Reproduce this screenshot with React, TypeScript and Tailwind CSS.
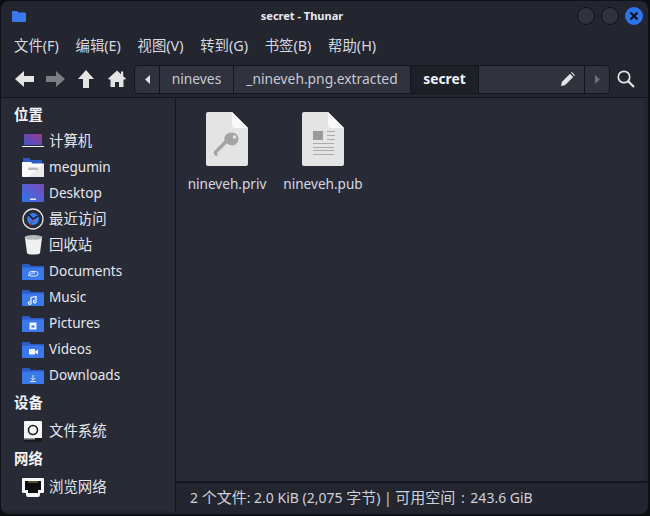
import type { ReactNode } from "react";

const FONT = "font-['Noto_Sans','Noto_Sans_CJK_SC',sans-serif]";

/* CJK glyphs sit a touch larger than the latin text in this theme */
function C({ children }: { children: ReactNode }) {
  return <span className="text-[15px]">{children}</span>;
}

/* Blue place folder, glyph drawn by the caller */
function FolderIcon({ children }: { children?: ReactNode }) {
  return (
    <svg width="22" height="17" viewBox="0 0 22 17">
      <path d="M0 2a1 1 0 0 1 1-1h6l2 2h12a1 1 0 0 1 1 1v12a1 1 0 0 1-1 1H1a1 1 0 0 1-1-1z" fill="#2a5cc4" />
      <path d="M0 5.500a1 1 0 0 1 1-1h20a1 1 0 0 1 1 1V16a1 1 0 0 1-1 1H1a1 1 0 0 1-1-1z" fill="#3b78ea" />
      {children}
    </svg>
  );
}

function ComputerIcon() {
  return (
    <svg width="22" height="14" viewBox="0 0 22 14">
      <defs>
        <linearGradient id="screen" x1="0" y1="1" x2="1" y2="0">
          <stop offset="0" stopColor="#3a58c8" />
          <stop offset="1" stopColor="#a0388e" />
        </linearGradient>
      </defs>
      <rect x="2" y="0" width="18" height="11" fill="url(#screen)" />
      <rect x="0" y="12" width="22" height="1" fill="#f5f5f5" />
    </svg>
  );
}

function HomeIcon() {
  return (
    <svg width="22" height="20" viewBox="0 0 22 20">
      <path d="M1 1h6l2 2h10a1 1 0 0 1 1 1v3H1z" fill="#2a5cc4" />
      <path d="M0 5h9l1.500 1.500H22V19a1 1 0 0 1-1 1H1a1 1 0 0 1-1-1z" fill="#fafafa" />
      <path d="M22 6.500V19a1 1 0 0 1-1 1H6z" fill="#eaeaea" />
      <rect x="6" y="10.500" width="10" height="2.500" rx="1" fill="#b9b9b9" />
    </svg>
  );
}

function DesktopIcon() {
  return (
    <svg width="22" height="18" viewBox="0 0 22 18">
      <defs>
        <linearGradient id="desk" x1="0" y1="1" x2="1" y2="0">
          <stop offset="0" stopColor="#2f74ee" />
          <stop offset="1" stopColor="#7a4ab4" />
        </linearGradient>
      </defs>
      <rect width="22" height="18" rx="1" fill="url(#desk)" />
      <rect x="8" y="14.500" width="6" height="1.500" fill="#e8e8f0" />
    </svg>
  );
}

function RecentIcon() {
  return (
    <svg width="22" height="22" viewBox="0 0 22 22">
      <circle cx="11" cy="11" r="10" fill="#282a36" stroke="#e4e4e4" strokeWidth="1.300" />
      <circle cx="11" cy="11" r="6" fill="#3b78ea" />
      <path d="M6.500 6.500l4.500 4.500 5-3" fill="none" stroke="#10131c" strokeWidth="1.400" />
      <path d="M11 11l-3 7" stroke="#b0303c" strokeWidth="1" />
    </svg>
  );
}

function TrashIcon() {
  return (
    <svg width="19" height="20" viewBox="0 0 19 20">
      <ellipse cx="9.500" cy="2.500" rx="9" ry="2.500" fill="#b8b8b8" />
      <path d="M1 3c2 2 15 2 17 0l-2 15c-.5 2-12.500 2-13 0z" fill="#f0f0ee" />
    </svg>
  );
}

function DriveIcon() {
  return (
    <svg width="18" height="21" viewBox="0 0 18 21">
      <rect width="18" height="21" rx="1" fill="#f7f7f7" />
      <rect y="17" width="18" height="4" fill="#1a1a1a" />
      <rect y="17" width="11" height="1.500" fill="#9a9a9a" />
      <circle cx="9" cy="9" r="4.500" fill="#f7f7f7" stroke="#1c1c1c" strokeWidth="1.600" />
    </svg>
  );
}

function NetworkIcon() {
  return (
    <svg width="22" height="19" viewBox="0 0 22 19">
      <path d="M1 0h20a1 1 0 0 1 1 1v13a1 1 0 0 1-1 1h-3v2a2 2 0 0 1-2 2H6a2 2 0 0 1-2-2v-2H1a1 1 0 0 1-1-1V1a1 1 0 0 1 1-1z" fill="#f7f7f7" />
      <path d="M3 3h16v9h-3v3H6v-3H3z" fill="#0d0d0d" />
      <path d="M7 3v2M9 3v2M11 3v2M13 3v2M15 3v2" stroke="#a88f4a" strokeWidth="1" />
    </svg>
  );
}

const placeFolders: { label: string; glyph: ReactNode }[] = [
  {
    label: "Documents",
    glyph: (
      <>
        <rect x="7" y="8.500" width="9" height="4.500" rx="2.200" fill="none" stroke="#dfe8fb" strokeWidth="1" />
        <path d="M6 13l4-3h3" fill="none" stroke="#dfe8fb" strokeWidth="1" />
      </>
    ),
  },
  { label: "Music", glyph: <path d="M9 14V8.500l5-1v5M9 14a1.300 1.300 0 1 1-1-1.200M14 12.500a1.300 1.300 0 1 1-1-1.200" fill="none" stroke="#f2f5fd" strokeWidth="1.200" /> },
  {
    label: "Pictures",
    glyph: (
      <>
        <rect x="7.500" y="7.500" width="7" height="7" fill="#f2f5fd" />
        <rect x="9.500" y="10.500" width="3" height="2" fill="#3b78ea" />
      </>
    ),
  },
  {
    label: "Videos",
    glyph: (
      <>
        <rect x="7" y="8" width="6" height="5.500" rx=".5" fill="#f2f5fd" />
        <path d="M13 10.500l3-2v5l-3-2z" fill="#f2f5fd" />
      </>
    ),
  },
  { label: "Downloads", glyph: <path d="M11 8v5M8.800 11l2.200 2.200 2.200-2.200M8 14.500h6" fill="none" stroke="#dfe8fb" strokeWidth="1" /> },
];

function SideHeader({ label, first }: { label: string; first?: boolean }) {
  return (
    <div className={`flex items-center pl-[13px] text-[14.4px] font-bold text-[#f2f4f8] ${first ? "h-[27px]" : "h-[30px]"}`}>
      {label}
    </div>
  );
}

function SideRow({ icon, label, cjk }: { icon: ReactNode; label: string; cjk?: boolean }) {
  return (
    <div className={`flex h-[26px] items-center text-[#e4e7ee] ${cjk ? "text-[14.4px]" : "text-[13.6px]"}`}>
      <span className="ml-[21px] mr-[5px] flex w-[22px] justify-center">{icon}</span>
      {label}
    </div>
  );
}

function FileIcon({ children }: { children: ReactNode }) {
  return (
    <svg width="42" height="54" viewBox="0 0 42 54">
      <path d="M2 0h24l16 16v36a2 2 0 0 1-2 2H2a2 2 0 0 1-2-2V2a2 2 0 0 1 2-2z" fill="#e4e4e4" />
      <path d="M26 0l16 16H29a3 3 0 0 1-3-3z" fill="#fafafa" />
      {children}
    </svg>
  );
}

function FileItem({ name, icon }: { name: string; icon: ReactNode }) {
  return (
    <div className="flex w-[96px] flex-col items-center">
      {icon}
      <span className="mt-[8px] text-[13.6px] leading-[20px] text-[#d5d9e2]">{name}</span>
    </div>
  );
}

export default function App() {
  return (
    <div className={`h-[516px] w-[650px] overflow-hidden bg-[#0d0e12] ${FONT}`}>
      <div className="flex h-[515px] w-[649px] flex-col overflow-hidden rounded-[9px] border border-[#10121a] bg-[#23252f]">
        {/* Title bar */}
        <div className="flex h-[30px] shrink-0 items-center pl-[11px] pr-[5px]">
          <svg width="14" height="11" viewBox="0 0 14 11">
            <path d="M0 1a1 1 0 0 1 1-1h4l1.500 1.500H13a1 1 0 0 1 1 1V10a1 1 0 0 1-1 1H1a1 1 0 0 1-1-1z" fill="#3b78ea" />
          </svg>
          <span className="flex-1 pl-[1px] text-center text-[11px] font-bold text-[#e8eaef]">secret - Thunar</span>
          <div className="flex items-center gap-[6px]">
            <span className="h-[18px] w-[18px] rounded-full border border-[#0f1016] bg-[#30333f]" />
            <span className="h-[18px] w-[18px] rounded-full border border-[#0f1016] bg-[#30333f]" />
            <span className="flex h-[18px] w-[18px] items-center justify-center rounded-full bg-[#2f74ee]">
              <svg width="10" height="10" viewBox="0 0 10 10">
                <path d="M1.500 1.500l7 7M8.500 1.500l-7 7" stroke="#10131c" strokeWidth="2.200" />
              </svg>
            </span>
          </div>
        </div>

        {/* Menu bar */}
        <div className="flex h-[29px] shrink-0 items-center gap-[16.6px] pl-[13px] text-[14.4px] text-[#d5d9e2]">
          {["文件(F)", "编辑(E)", "视图(V)", "转到(G)", "书签(B)", "帮助(H)"].map((m) => (
            <span key={m}>{m}</span>
          ))}
        </div>

        {/* Toolbar */}
        <div className="flex h-[38px] shrink-0 items-center border-b border-[#14161d]">
          <div className="flex w-[133px] shrink-0 items-center pl-[14px]">
            <svg width="19" height="16" viewBox="0 0 19 16">
              <path d="M9 0v5h10v6H9v5L0 8z" fill="#e4e4e4" />
            </svg>
            <svg className="ml-[12px]" width="19" height="16" viewBox="0 0 19 16">
              <path d="M10 0v5H0v6h10v5l9-8z" fill="#7b7e85" />
            </svg>
            <svg className="ml-[13px]" width="16" height="18" viewBox="0 0 16 18">
              <path d="M8 0l8 9h-5v9H5V9H0z" fill="#e4e4e4" />
            </svg>
            <svg className="ml-[14px]" width="18" height="17" viewBox="0 0 18 17">
              <path d="M9 .5l4 3.700V1.500h2.200v4.700L18 8.800l-.8.7H15.500V17H11v-5H7v5H2.500V9.500H.8L0 8.800z" fill="#e4e4e4" />
            </svg>
          </div>
          <div className="mt-[1px] flex h-[29px] w-[476px] shrink-0 items-center overflow-hidden rounded-[4px] border border-[#14161d] bg-[#30323e] text-[13.8px]">
            <div className="flex h-full w-[25px] shrink-0 items-center justify-center border-r border-[#14161d]">
              <svg width="5" height="9" viewBox="0 0 5 9">
                <path d="M5 0v9L0 4.500z" fill="#e4e4e4" />
              </svg>
            </div>
            <div className="flex h-full w-[74px] shrink-0 items-center justify-center border-r border-[#14161d] text-[#c6cad3]">nineves</div>
            <div className="flex h-full w-[177px] shrink-0 items-center justify-center border-r border-[#14161d] text-[#c6cad3]">_nineveh.png.extracted</div>
            <div className="flex h-full w-[68px] shrink-0 items-center justify-center border-r border-[#14161d] bg-[#1e2028] font-bold text-[#f2f4f8]">
              secret
            </div>
            <div className="flex h-full flex-1 items-center justify-end border-r border-[#14161d] pr-[9px]">
              <svg width="14" height="14" viewBox="0 0 14 14">
                <path d="M0 14l.8-4L9 1.800l3.200 3.200L4 13.200zM10 .8l.8-.8 3.200 3.200-.8.8z" fill="#e4e4e4" />
              </svg>
            </div>
            <div className="flex h-full w-[24px] items-center justify-center">
              <svg width="5" height="9" viewBox="0 0 5 9">
                <path d="M0 0v9l5-4.500z" fill="#6d7079" />
              </svg>
            </div>
          </div>
          <svg className="ml-[7px]" width="18" height="18" viewBox="0 0 18 18">
            <circle cx="7" cy="7" r="5.700" fill="none" stroke="#e4e4e4" strokeWidth="1.700" />
            <path d="M11 11l6 6" stroke="#e4e4e4" strokeWidth="2.200" />
          </svg>
        </div>

        {/* Body */}
        <div className="flex min-h-0 flex-1 pb-[3px]">
          <aside className="w-[175px] shrink-0 border-r border-[#14161d] bg-[#282a36] pt-[3px]">
            <SideHeader label="位置" first />
            <SideRow icon={<ComputerIcon />} label="计算机" cjk />
            <SideRow icon={<HomeIcon />} label="megumin" />
            <SideRow icon={<DesktopIcon />} label="Desktop" />
            <SideRow icon={<RecentIcon />} label="最近访问" cjk />
            <SideRow icon={<TrashIcon />} label="回收站" cjk />
            {placeFolders.map((f) => (
              <SideRow key={f.label} icon={<FolderIcon>{f.glyph}</FolderIcon>} label={f.label} />
            ))}
            <SideHeader label="设备" />
            <SideRow icon={<DriveIcon />} label="文件系统" cjk />
            <SideHeader label="网络" />
            <SideRow icon={<NetworkIcon />} label="浏览网络" cjk />
          </aside>

          <main className="flex min-w-0 flex-1 flex-col">
            <div className="mr-[4px] flex flex-1 items-start bg-[#282a36] pl-[3px] pt-[14px]">
              <FileItem
                name="nineveh.priv"
                icon={
                  <FileIcon>
                    <path d="M26 20.500a6.500 6.500 0 1 1-5 10.700L11 41l1 1.500-1.500 1.500-1.500-.5-1-1.500-.5-2 11-11.500a6.500 6.500 0 0 1 8.500-7.500z" fill="#a4a4a4" />
                    <circle cx="28.500" cy="25" r="1.700" fill="#e4e4e4" />
                  </FileIcon>
                }
              />
              <FileItem
                name="nineveh.pub"
                icon={
                  <FileIcon>
                    <rect x="11" y="19" width="10" height="9" fill="#9a9a9a" />
                    <path d="M25 19.500h8M25 23.500h8M25 27.500h8M11 31.500h21M11 35.500h21M11 38.500h21M11 42.500h21" stroke="#ababab" strokeWidth="1.200" />
                  </FileIcon>
                }
              />
            </div>
            <div className="flex h-[30px] shrink-0 items-center border-t-2 border-[#14161d] pl-[14px] text-[14px] text-[#cdd1da]">
              <span className="whitespace-pre">
                2 <C>个文件</C>: 2.0 KiB (2,075 <C>字节</C>) | <C>可用空间</C>
              </span>
              <span className="w-[15px] text-center">:</span>
              <span>243.6 GiB</span>
            </div>
          </main>
        </div>
      </div>
    </div>
  );
}
